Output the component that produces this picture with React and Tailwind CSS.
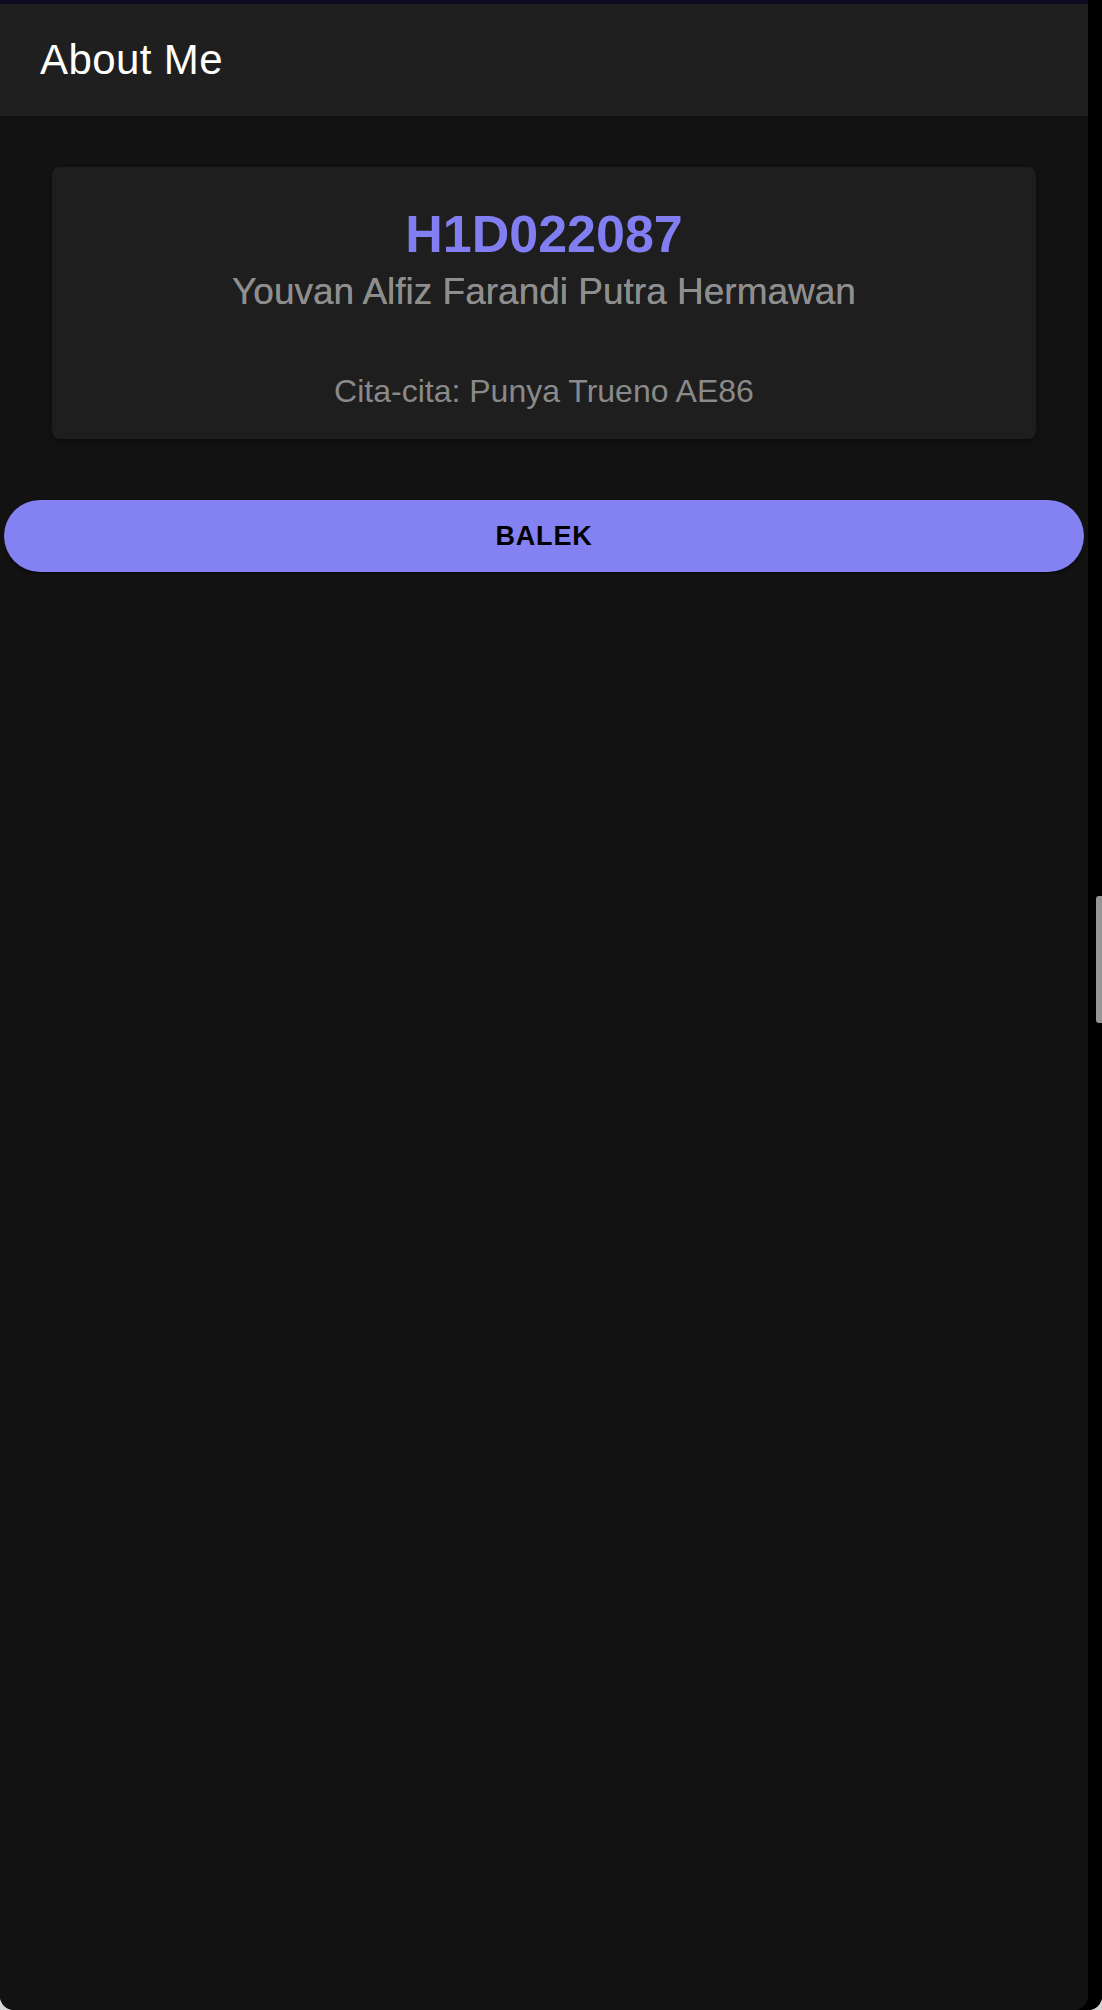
import React from "react";

export default function App() {
  return (
    <div
      className="w-[1102px] h-[2010px] bg-[#d6d6d6] overflow-hidden"
      style={{ fontFamily: '"Liberation Sans", Arial, Helvetica, sans-serif' }}
    >
      <div className="flex h-full rounded-b-[14px] overflow-hidden bg-black">
        <div className="w-[1088px] h-full bg-[#121212] flex flex-col rounded-b-[14px]">
          <div className="h-[4px] bg-[#0e0c20]" />
          <header className="h-[112px] bg-[#1f1f1f] flex items-center pl-[40px]">
            <h1 className="text-[42px] leading-[48px] text-white tracking-[0.4px]">About Me</h1>
          </header>
          <main className="flex flex-col">
            <div className="px-[52px] pt-[51px]">
              <div className="h-[272px] rounded-[8px] bg-[#1e1e1e] shadow-[0_2px_4px_rgba(0,0,0,0.35)] flex flex-col items-center pt-[37px]">
                <div className="text-[52px] leading-[60px] font-bold text-[#817ef2]">H1D022087</div>
                <div className="mt-[6px] text-[37px] leading-[44px] text-[#8e8e8e] [text-shadow:0_0_0.4px_#8e8e8e]">
                  Youvan Alfiz Farandi Putra Hermawan
                </div>
                <div className="mt-[58px] text-[32px] leading-[38px] text-[#8a8a8a]">
                  Cita-cita: Punya Trueno AE86
                </div>
              </div>
            </div>
            <button className="mt-[61px] mx-[4px] h-[72px] rounded-full bg-[#8482f2] text-black text-[27px] font-bold tracking-[0.8px] flex items-center justify-center shadow-[0_2px_3px_rgba(0,0,0,0.4)]">
              BALEK
            </button>
          </main>
        </div>
        <div className="relative w-[14px] h-full bg-black">
          <div className="absolute left-[8px] top-[896px] w-[6px] h-[127px] rounded-l-[3px] bg-[#959595]" />
        </div>
      </div>
    </div>
  );
}
